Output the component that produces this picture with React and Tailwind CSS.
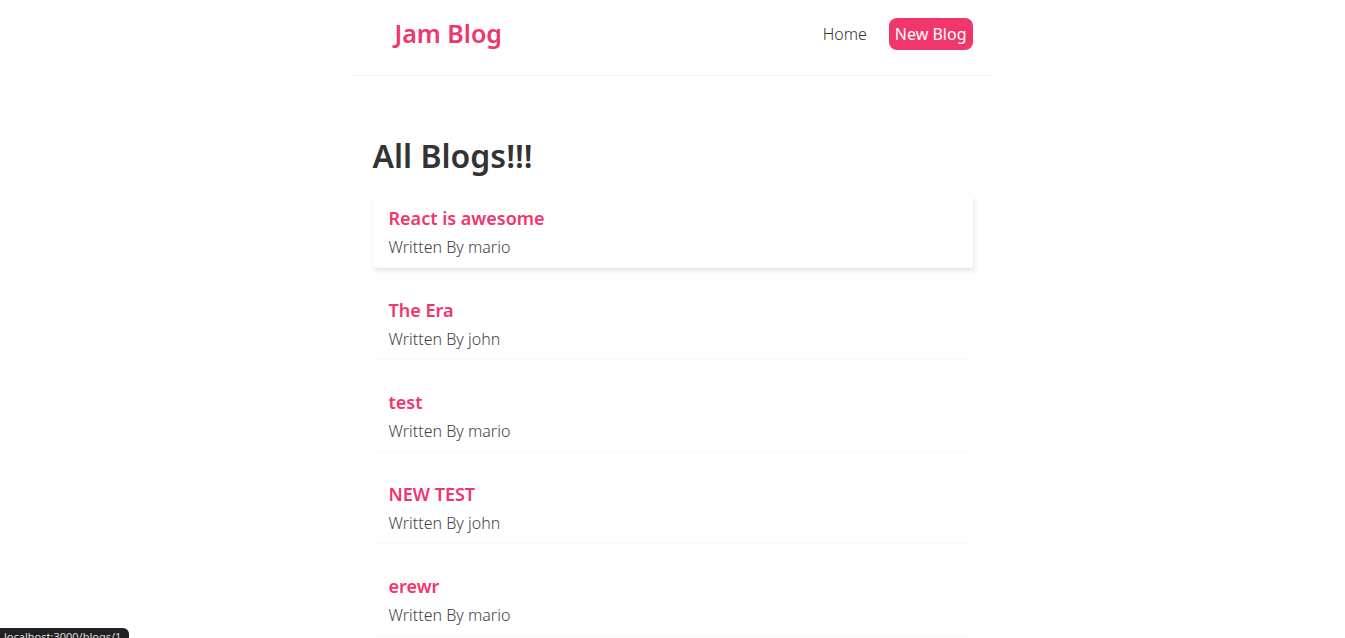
const blogs = [
  { id: 1, title: 'React is awesome', author: 'mario' },
  { id: 2, title: 'The Era', author: 'john' },
  { id: 3, title: 'test', author: 'mario' },
  { id: 4, title: 'NEW TEST', author: 'john' },
  { id: 5, title: 'erewr', author: 'mario' },
];

export default function App() {
  return (
    <div className="relative h-[638px] overflow-hidden bg-white text-[#333] font-['Noto_Sans',sans-serif]">

      {/* Navbar */}
      <nav className="mx-auto flex h-[76px] w-[640px] items-center border-b border-[#f2f2f2] px-5 pb-2">
        <h1 className="ml-[22px] text-[25px] font-semibold text-[#f1356d]">Jam Blog</h1>
        <div className="ml-auto flex items-center text-[16px]">
          <a href="#" className="p-1.5 font-light text-[#333]">Home</a>
          <a href="#" className="ml-4 rounded-lg bg-[#f1356d] px-1.5 py-1 text-white">New Blog</a>
        </div>
      </nav>

      {/* Content */}
      <div className="mx-auto mt-10 w-[640px] p-5">
        <h2 className="text-[32px] leading-[40px] font-semibold text-[#333]">All Blogs!!!</h2>
        {blogs.map((b, i) => (
          <div
            key={b.id}
            className={`my-5 border-b border-[#fafafa] px-4 py-2.5 ${i === 0 ? 'shadow-[1px_3px_5px_rgba(0,0,0,0.1)]' : ''}`}
          >
            <h2 className="mb-2 text-[18px] leading-6 font-semibold text-[#f1356d]">{b.title}</h2>
            <p className="text-[16px] leading-[19px] font-light text-[#444]">Written By {b.author}</p>
          </div>
        ))}
      </div>

      {/* Browser status bar */}
      <div className="absolute top-[628px] left-0 h-5 w-[129px] rounded-tr-md bg-[#202124] pl-1 pt-[1px] text-[11px] leading-4 text-[#ddd]">
        localhost:3000/blogs/1
      </div>
    </div>
  );
}
